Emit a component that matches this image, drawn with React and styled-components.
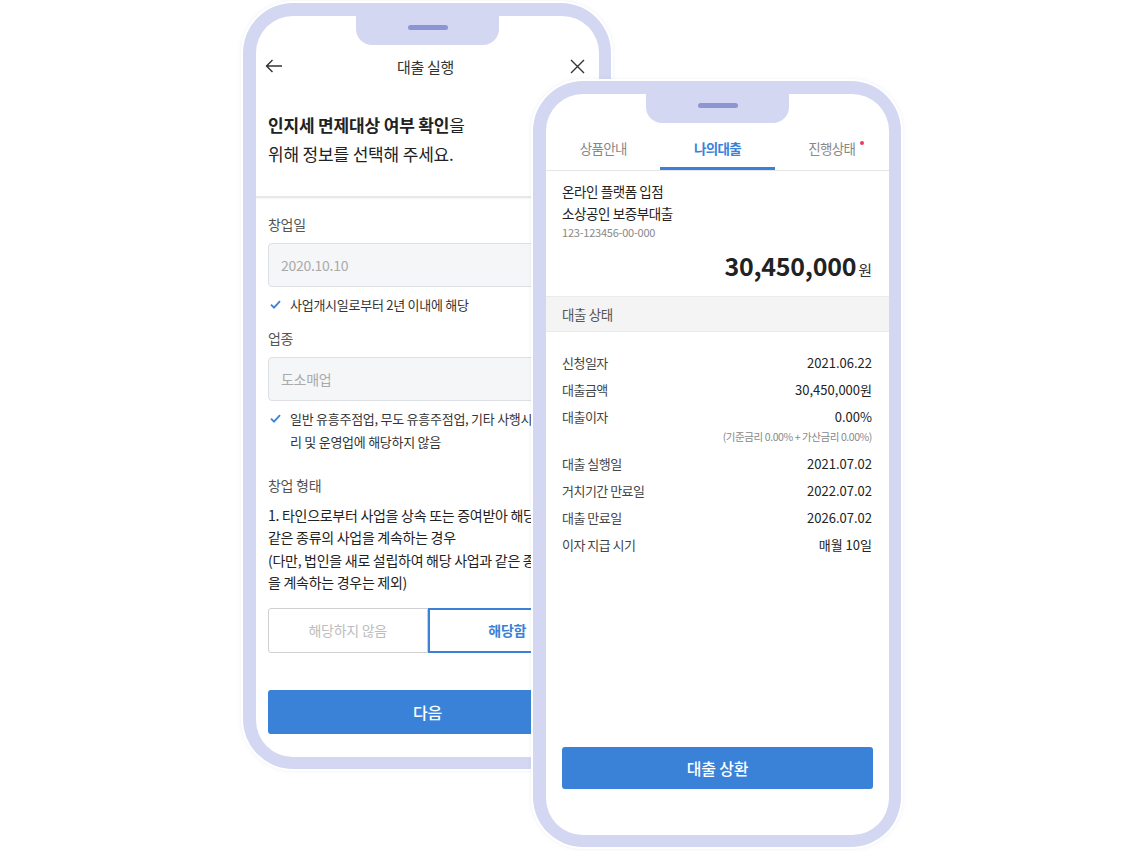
import React from 'react';
import styled, { createGlobalStyle } from 'styled-components';

const GlobalStyle = createGlobalStyle`
  html, body {
    margin: 0;
    padding: 0;
    background: #ffffff;
  }
  body {
    font-family: "Noto Sans CJK KR", "Noto Sans", sans-serif;
    color: #222;
  }
  * { box-sizing: border-box; }
`;

const FRAME = '#d3d7f1';
const BLUE = '#3a82d8';

const Stage = styled.div`
  position: relative;
  width: 1143px;
  height: 851px;
  overflow: hidden;
`;

const Phone = styled.div`
  position: absolute;
  left: ${p => p.x}px;
  top: ${p => p.y}px;
  width: 368px;
  height: 766px;
  padding: 13px 12px 12px 13px;
  border-radius: 50px;
  background: ${FRAME};
  box-shadow: 0 0 0 2px #fff, 0 0 4px 2px rgba(120, 130, 170, 0.12);
  z-index: ${p => p.z};
`;

const Screen = styled.div`
  position: relative;
  width: 100%;
  height: 100%;
  border-radius: 37px;
  background: #fff;
  overflow: hidden;
  display: flex;
  flex-direction: column;
`;

const Notch = styled.div`
  position: absolute;
  top: 0;
  left: 50%;
  width: 143px;
  height: 29px;
  margin-left: -71.5px;
  background: ${FRAME};
  border-radius: 0 0 16px 16px;
  display: flex;
  justify-content: center;
  padding-top: 9px;
  z-index: 2;
  &::after {
    content: '';
    width: 40px;
    height: 5px;
    border-radius: 3px;
    background: #8d96d3;
  }
`;

/* ---------- left phone ---------- */

const Header = styled.div`
  margin-top: 30px;
  height: 40px;
  padding: 0 12px 0 8px;
  display: flex;
  align-items: center;
  justify-content: space-between;
`;

const HeaderTitle = styled.div`
  font-size: 15px;
  color: #333;
  letter-spacing: -0.02em;
`;

const IconButton = styled.span`
  width: 20px;
  height: 20px;
  display: flex;
  align-items: center;
  justify-content: center;
  color: #333;
`;

const Heading = styled.h2`
  margin: 24px 12px 0;
  font-size: 17px;
  line-height: 29px;
  font-weight: 400;
  color: #222;
  letter-spacing: -0.01em;
  strong { font-weight: 700; }
`;

const Divider = styled.div`
  margin-top: 28px;
  height: 2px;
  background: #e6e9ea;
  box-shadow: 0 1px 1px rgba(0, 0, 0, 0.04);
`;

const Form = styled.div`
  padding: 0 12px;
  display: flex;
  flex-direction: column;
`;

const Label = styled.div`
  margin-top: ${p => p.gap}px;
  font-size: 14px;
  line-height: 20px;
  color: #555;
  letter-spacing: -0.02em;
`;

const Input = styled.div`
  margin-top: 9px;
  height: 44px;
  padding: 0 12px;
  display: flex;
  align-items: center;
  background: #f5f6f8;
  border: 1px solid #dcdfe3;
  border-radius: 4px;
  font-size: 14px;
  color: #aaa;
  letter-spacing: -0.02em;
`;

const Check = styled.div`
  margin-top: 6px;
  display: flex;
  gap: 9px;
  font-size: 13px;
  line-height: 23px;
  color: #333;
  letter-spacing: -0.02em;
  white-space: nowrap;
  svg { flex: none; margin-top: 7px; margin-left: 2px; }
`;

const Para = styled.p`
  margin: 9px 0 0;
  font-size: 14px;
  line-height: 22.4px;
  color: #222;
  letter-spacing: -0.02em;
  white-space: nowrap;
`;

const Segments = styled.div`
  margin-top: 14px;
  display: grid;
  grid-template-columns: 1fr 1fr;
  height: 45px;
`;

const Segment = styled.button`
  font-family: inherit;
  font-size: 14px;
  letter-spacing: -0.02em;
  background: #fff;
  font-weight: ${p => (p.active ? 700 : 400)};
  color: ${p => (p.active ? BLUE : '#bdbdbd')};
  border: ${p => (p.active ? `2px solid ${BLUE}` : '1px solid #cfcfd4')};
  border-radius: ${p => (p.active ? '0 3px 3px 0' : '3px 0 0 3px')};
`;

const PrimaryButton = styled.button`
  margin-top: ${p => p.gap};
  height: ${p => p.h}px;
  width: 100%;
  border: none;
  border-radius: 3px;
  background: ${BLUE};
  color: #fff;
  font-family: inherit;
  font-size: 16px;
  font-weight: 500;
  letter-spacing: -0.01em;
`;

/* ---------- right phone ---------- */

const Tabs = styled.div`
  margin-top: 34px;
  display: grid;
  grid-template-columns: repeat(3, 1fr);
  border-bottom: 1px solid #e6e6e6;
`;

const Tab = styled.div`
  position: relative;
  height: 42px;
  display: flex;
  align-items: center;
  justify-content: center;
  font-size: 13.5px;
  letter-spacing: -0.05em;
  font-weight: ${p => (p.active ? 700 : 400)};
  color: ${p => (p.active ? BLUE : '#888')};
  border-bottom: 3px solid ${p => (p.active ? BLUE : 'transparent')};
`;

const Dot = styled.span`
  position: absolute;
  top: 13px;
  right: 25px;
  width: 4px;
  height: 4px;
  border-radius: 50%;
  background: #ec3b5f;
`;

const Product = styled.div`
  padding: 9px 17px 0 16px;
  display: flex;
  flex-direction: column;
`;

const ProductName = styled.div`
  font-size: 13.5px;
  line-height: 22px;
  color: #222;
  letter-spacing: -0.03em;
`;

const AccountNo = styled.div`
  font-size: 11px;
  line-height: 16px;
  color: #888;
  letter-spacing: -0.02em;
`;

const Amount = styled.div`
  margin-top: 8px;
  display: flex;
  justify-content: flex-end;
  align-items: baseline;
  gap: 2px;
  line-height: 34px;
  b {
    font-size: 25px;
    font-weight: 700;
    color: #222;
    letter-spacing: -0.01em;
  }
  span {
    font-size: 15px;
    color: #333;
  }
`;

const Band = styled.div`
  margin-top: 9px;
  height: 36px;
  padding: 0 16px;
  display: flex;
  align-items: center;
  background: #f4f4f4;
  border-top: 1px solid #ebebeb;
  border-bottom: 1px solid #ebebeb;
  font-size: 13.5px;
  color: #555;
  letter-spacing: -0.03em;
`;

const Rows = styled.dl`
  margin: 0;
  padding: 17px 17px 0 16px;
  display: flex;
  flex-direction: column;
`;

const Row = styled.div`
  display: flex;
  justify-content: space-between;
  line-height: 27px;
  font-size: 13px;
  dt { color: #444; letter-spacing: -0.04em; }
  dd { margin: 0; color: #222; }
`;

const RowNote = styled.div`
  text-align: right;
  font-size: 10.5px;
  line-height: 14px;
  margin-bottom: 6px;
  color: #888;
  letter-spacing: -0.04em;
`;

const BottomArea = styled.div`
  margin-top: auto;
  padding: 0 16px 46px 16px;
`;

const CheckIcon = () => (
  <svg width="11" height="9" viewBox="0 0 11 9">
    <path d="M1 4.6 L4 7.6 L10 1.2" fill="none" stroke={BLUE} strokeWidth="1.8" />
  </svg>
);

const BackIcon = () => (
  <svg width="18" height="14" viewBox="0 0 18 14">
    <path d="M17 7 H1.5 M7.5 1 L1.5 7 L7.5 13" fill="none" stroke="#333" strokeWidth="1.4" />
  </svg>
);

const CloseIcon = () => (
  <svg width="15" height="15" viewBox="0 0 15 15">
    <path d="M1 1 L14 14 M14 1 L1 14" fill="none" stroke="#333" strokeWidth="1.4" />
  </svg>
);

const details = [
  ['신청일자', '2021.06.22'],
  ['대출금액', '30,450,000원'],
  ['대출이자', '0.00%', '(기준금리 0.00% + 가산금리 0.00%)'],
  ['대출 실행일', '2021.07.02'],
  ['거치기간 만료일', '2022.07.02'],
  ['대출 만료일', '2026.07.02'],
  ['이자 지급 시기', '매월 10일'],
];

const ApplyScreen = () => (
  <Screen>
    <Notch />
    <Header>
      <IconButton><BackIcon /></IconButton>
      <HeaderTitle>대출 실행</HeaderTitle>
      <IconButton><CloseIcon /></IconButton>
    </Header>
    <Heading>
      <strong>인지세 면제대상 여부 확인</strong>을<br />
      위해 정보를 선택해 주세요.
    </Heading>
    <Divider />
    <Form>
      <Label gap={16}>창업일</Label>
      <Input>2020.10.10</Input>
      <Check>
        <CheckIcon />
        <span>사업개시일로부터 2년 이내에 해당</span>
      </Check>
      <Label gap={12}>업종</Label>
      <Input>도소매업</Input>
      <Check>
        <CheckIcon />
        <span>
          일반 유흥주점업, 무도 유흥주점업, 기타 사행시설 관<br />
          리 및 운영업에 해당하지 않음
        </span>
      </Check>
      <Label gap={22}>창업 형태</Label>
      <Para>
        1. 타인으로부터 사업을 상속 또는 증여받아 해당 사업과<br />
        같은 종류의 사업을 계속하는 경우<br />
        (다만, 법인을 새로 설립하여 해당 사업과 같은 종류의 사업<br />
        을 계속하는 경우는 제외)
      </Para>
      <Segments>
        <Segment>해당하지 않음</Segment>
        <Segment active>해당함</Segment>
      </Segments>
      <PrimaryButton gap="37px" h={44}>다음</PrimaryButton>
    </Form>
  </Screen>
);

const LoanScreen = () => (
  <Screen>
    <Notch />
    <Tabs>
      <Tab>상품안내</Tab>
      <Tab active>나의대출</Tab>
      <Tab>진행상태<Dot /></Tab>
    </Tabs>
    <Product>
      <ProductName>온라인 플랫폼 입점</ProductName>
      <ProductName>소상공인 보증부대출</ProductName>
      <AccountNo>123-123456-00-000</AccountNo>
      <Amount>
        <b>30,450,000</b>
        <span>원</span>
      </Amount>
    </Product>
    <Band>대출 상태</Band>
    <Rows>
      {details.map(([label, value, note]) => (
        <React.Fragment key={label}>
          <Row>
            <dt>{label}</dt>
            <dd>{value}</dd>
          </Row>
          {note && <RowNote>{note}</RowNote>}
        </React.Fragment>
      ))}
    </Rows>
    <BottomArea>
      <PrimaryButton gap="0" h={42}>대출 상환</PrimaryButton>
    </BottomArea>
  </Screen>
);

const App = () => (
  <Stage>
    <GlobalStyle />
    <Phone x={243} y={3} z={1}>
      <ApplyScreen />
    </Phone>
    <Phone x={533} y={81} z={2}>
      <LoanScreen />
    </Phone>
  </Stage>
);

export default App;
